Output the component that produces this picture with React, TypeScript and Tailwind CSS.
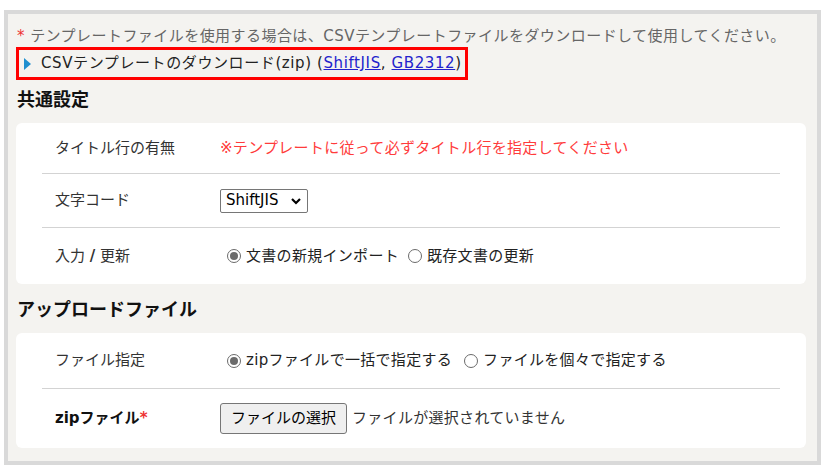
import React from 'react';

const font = { fontFamily: '"DejaVu Sans", "Noto Sans CJK JP", sans-serif' };

const Radio = ({ checked, ml = 'ml-[7px]' }: { checked?: boolean; ml?: string }) => (
  <span className={`inline-flex items-center justify-center w-[14px] h-[14px] rounded-full border border-[#6b6b6b] bg-white ${ml} mr-[5px] shrink-0`}>
    {checked && <span className="w-[8px] h-[8px] rounded-full bg-[#6b6b6b]" />}
  </span>
);

const Row = ({ label, children, h, last }: { label: React.ReactNode; children: React.ReactNode; h: string; last?: boolean }) => (
  <div className={`mx-[26px] flex items-center ${h} ${last ? '' : 'border-b border-[#d3d3d3]'}`}>
    <div className="w-[178px] pl-[13px] text-[#333] text-[15px]">{label}</div>
    <div className="flex items-center text-[15px] text-[#222] tracking-[0.3px]">{children}</div>
  </div>
);

export default function App() {
  return (
    <div className="w-[825px] h-[465px] bg-white pt-[10px] px-[4px]" style={font}>
      <div className="h-[455px] border-4 border-[#d9d9d9] bg-[#f4f3f0] pt-[11px] pr-[11px] pl-[8px]">
        <p className="pl-[1px] text-[15px] leading-[22px] text-[#666] whitespace-nowrap tracking-[0.45px]">
          <span className="text-[#e33]">*</span> テンプレートファイルを使用する場合は、CSVテンプレートファイルをダウンロードして使用してください。
        </p>
        <div className="w-[452px] h-[33px] border-[3px] border-[#ff0000] flex items-center pl-[5px] text-[15px] text-[#222] whitespace-nowrap tracking-[0.6px]">
          <span className="w-0 h-0 border-y-[6px] border-y-transparent border-l-[7px] border-l-[#1f8fcf] mr-[10px]" />
          CSVテンプレートのダウンロード(zip) (
          <a className="text-[#2222cc] underline">ShiftJIS</a>,&nbsp;
          <a className="text-[#2222cc] underline">GB2312</a>)
        </div>
        <h2 className="mt-[8px] pl-[1px] text-[18px] font-bold leading-[24px] text-[#111]">共通設定</h2>
        <div className="mt-[11px] bg-white rounded-[6px]">
          <Row label="タイトル行の有無" h="h-[51px]">
            <span className="text-[#ff3b3b]">※テンプレートに従って必ずタイトル行を指定してください</span>
          </Row>
          <Row label="文字コード" h="h-[54px]">
            <span className="inline-flex items-center h-[24px] w-[88px] border border-[#767676] rounded-[2px] px-[5px] text-[15px] text-black tracking-normal">
              ShiftJIS
              <svg width="12" height="10" viewBox="0 0 12 10" className="ml-auto">
                <path d="M2 3 L6 7 L10 3" stroke="#000" strokeWidth="2.2" fill="none" />
              </svg>
            </span>
          </Row>
          <Row label={<span>入力 <b>/</b> 更新</span>} h="h-[56px]" last>
            <span className="inline-flex items-center">
              <Radio checked />文書の新規インポート
              <Radio ml="ml-[9px]" />既存文書の更新
            </span>
          </Row>
        </div>
        <h2 className="mt-[14px] pl-[1px] text-[18px] font-bold leading-[24px] text-[#111]">アップロードファイル</h2>
        <div className="mt-[11px] bg-white rounded-[6px]">
          <Row label="ファイル指定" h="h-[56px]">
            <span className="inline-flex items-center">
              <Radio checked />zipファイルで一括で指定する
              <Radio ml="ml-[12px]" />ファイルを個々で指定する
            </span>
          </Row>
          <Row label={<span className="font-bold text-[#111]">zipファイル<span className="text-[#e33]">*</span></span>} h="h-[59px]" last>
            <span className="inline-flex items-center h-[31px] px-[10px] border border-[#767676] rounded-[3px] bg-[#efefef] text-black tracking-normal">ファイルの選択</span>
            <span className="ml-[5px] text-[#333]">ファイルが選択されていません</span>
          </Row>
        </div>
      </div>
    </div>
  );
}
